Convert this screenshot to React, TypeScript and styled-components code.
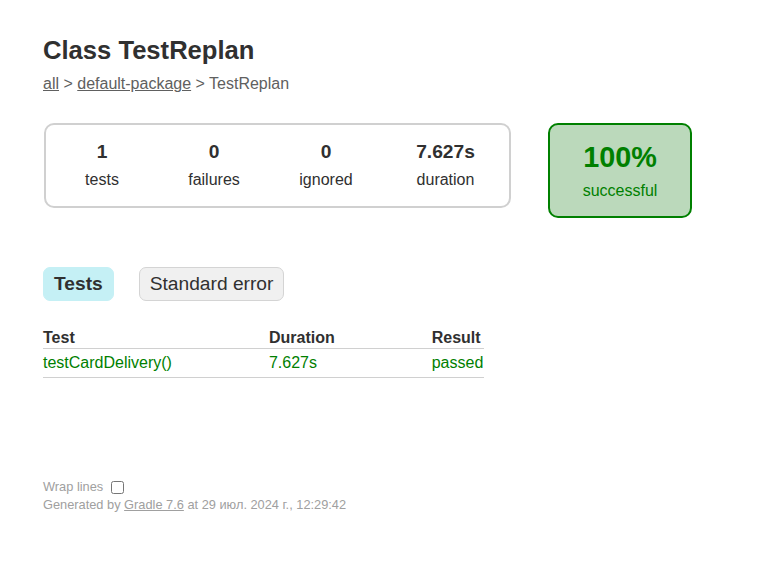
import { FC } from "react"
import styled, { createGlobalStyle } from "styled-components";

const GlobalStyle = createGlobalStyle`
    body {
        margin: 0;
        padding: 0;
        background: #ffffff;
        font-family: "Liberation Sans", Arial, sans-serif;
        font-size: 16px;
        color: #303030;
    }
`;

type Counter = { value: string; label: string; wide?: boolean };

const counters: Counter[] = [
    { value: "1", label: "tests" },
    { value: "0", label: "failures" },
    { value: "0", label: "ignored" },
    { value: "7.627s", label: "duration", wide: true },
];

const tests = [
    { name: "testCardDelivery()", duration: "7.627s", result: "passed" },
];

const App: FC<{}> = () => {
    return (
        <Root>
            <GlobalStyle />
            <Title>Class TestReplan</Title>
            <Breadcrumbs>
                <Crumb href="#">all</Crumb> &gt; <Crumb href="#">default-package</Crumb> &gt; TestReplan
            </Breadcrumbs>

            <Summary>
                <SummaryGroup>
                    {counters.map((c) => (
                        <InfoBox key={c.label} $wide={c.wide}>
                            <CounterValue>{c.value}</CounterValue>
                            <CounterLabel>{c.label}</CounterLabel>
                        </InfoBox>
                    ))}
                </SummaryGroup>
                <SuccessRate>
                    <Percent>100%</Percent>
                    <SuccessLabel>successful</SuccessLabel>
                </SuccessRate>
            </Summary>

            <TabLinks>
                <TabLink $selected>Tests</TabLink>
                <TabLink>Standard error</TabLink>
            </TabLinks>

            <TestTable>
                <thead>
                    <tr>
                        <Th>Test</Th>
                        <Th>Duration</Th>
                        <Th>Result</Th>
                    </tr>
                </thead>
                <tbody>
                    {tests.map((t) => (
                        <tr key={t.name}>
                            <Td>{t.name}</Td>
                            <Td>{t.duration}</Td>
                            <Td>{t.result}</Td>
                        </tr>
                    ))}
                </tbody>
            </TestTable>

            <Footer>
                <WrapToggle>
                    Wrap lines <Checkbox type="checkbox" />
                </WrapToggle>
                <div>
                    Generated by <FooterLink href="#">Gradle 7.6</FooterLink> at 29 июл. 2024 г., 12:29:42
                </div>
            </Footer>
        </Root>
    )
}

export default App;

const Root = styled.div`
    padding: 36px 50px 30px 43px;
`;

const Title = styled.h1`
    font-size: 25.6px;
    font-weight: bold;
    margin: 0 0 10px;
    white-space: nowrap;
    color: #303030;
`;

const Breadcrumbs = styled.div`
    color: #606060;
`;

const Crumb = styled.a`
    color: #606060;
    text-decoration: underline;
`;

const Summary = styled.div`
    display: flex;
    flex-direction: row;
    align-items: flex-start;
    gap: 37px;
    margin-top: 30px;
    margin-bottom: 39px;
    margin-left: 1px;
`;

const SummaryGroup = styled.div`
    display: flex;
    flex-direction: row;
    gap: 2px;
    padding: 0 1px;
    border: solid 2px #d0d0d0;
    border-radius: 10px;
`;

const InfoBox = styled.div<{ $wide?: boolean }>`
    width: ${(p) => (p.$wide ? 125 : 110)}px;
    padding: 16px 0 17px;
    text-align: center;
`;

const CounterValue = styled.p`
    margin: 0 0 8px;
    font-size: 19.2px;
    font-weight: bold;
`;

const CounterLabel = styled.p`
    margin: 0;
`;

const SuccessRate = styled.div`
    width: 140px;
    padding: 16px 0;
    text-align: center;
    border: solid 2px #008000;
    border-radius: 10px;
    background-color: #bbd9bb;
    color: #008000;
`;

const Percent = styled.p`
    margin: 0 0 8px;
    font-size: 28.8px;
    font-weight: bold;
`;

const SuccessLabel = styled.p`
    margin: 0;
`;

const TabLinks = styled.ul`
    display: flex;
    flex-direction: row;
    gap: 25px;
    margin: 0;
    padding: 10px 0;
    list-style: none;
`;

const TabLink = styled.li<{ $selected?: boolean }>`
    padding: 5px 10px;
    border-radius: 7px;
    border: solid 1px ${(p) => (p.$selected ? "#c5f0f5" : "#d4d4d4")};
    background-color: ${(p) => (p.$selected ? "#c5f0f5" : "#f0f0f0")};
    font-size: 19.2px;
    font-weight: ${(p) => (p.$selected ? "bold" : "normal")};
    color: #303030;
    cursor: pointer;
`;

const TestTable = styled.table`
    margin-top: 17px;
    min-width: 350px;
    border-collapse: collapse;
    border-bottom: solid #d0d0d0 1px;
`;

const Th = styled.th`
    text-align: left;
    white-space: nowrap;
    padding: 1px 1px 1px 96px;
    border-bottom: solid #d0d0d0 1px;
    &:first-child {
        padding-left: 0;
    }
`;

const Td = styled.td`
    white-space: nowrap;
    padding: 5px 1px 5px 96px;
    color: #008000;
    &:first-child {
        padding-left: 0;
    }
`;

const Footer = styled.div`
    margin-top: 100px;
    font-size: 12.8px;
    white-space: nowrap;
    color: #a0a0a0;
`;

const WrapToggle = styled.label`
    display: block;
    vertical-align: middle;
`;

const Checkbox = styled.input`
    vertical-align: middle;
    margin: 3px 3px 3px 4px;
`;

const FooterLink = styled.a`
    color: #a0a0a0;
    text-decoration: underline;
`;
